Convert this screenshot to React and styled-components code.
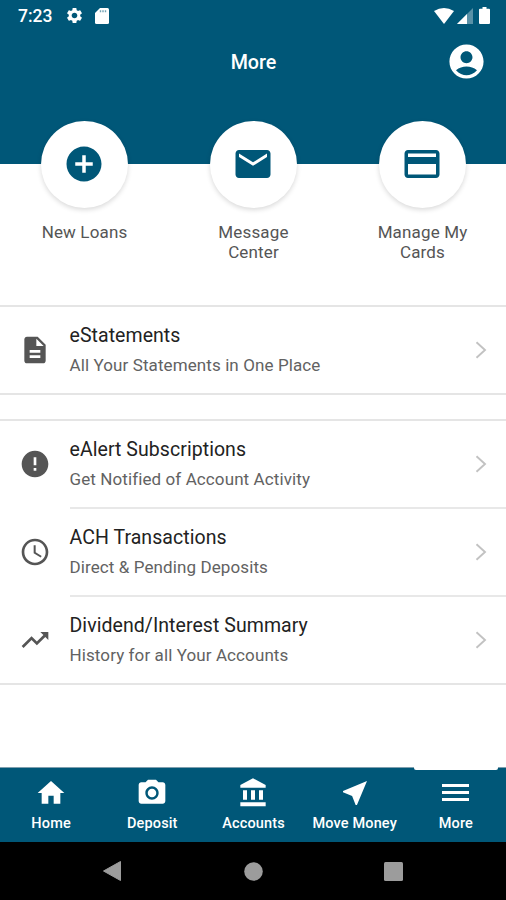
import * as React from 'react';
import styled, { createGlobalStyle } from 'styled-components';
import {
  MdAccountCircle,
  MdAddCircle,
  MdDescription,
  MdError,
  MdHome,
  MdMail,
  MdNearMe,
  MdPhotoCamera,
  MdSettings,
  MdTrendingUp,
} from 'react-icons/md';

const GlobalStyle = createGlobalStyle`
  * {
    box-sizing: border-box;
  }

  body {
    margin: 0;
    background: #fff;
    font-family: Roboto, 'Liberation Sans', sans-serif;
  }

  svg {
    display: block;
    flex: none;
  }
`;

const Screen = styled.div`
  display: flex;
  flex-direction: column;
  width: 506px;
  height: 900px;
  overflow: hidden;
  background: #fff;
`;

const Header = styled.header`
  flex: none;
  height: 163.5px;
  background: #005778;
  color: #fff;
`;

const StatusBar = styled.div`
  display: flex;
  align-items: center;
  height: 31px;
  padding: 0 16px 0 18px;
`;

const Clock = styled.span`
  width: 47px;
  padding-top: 1px;
  font-size: 17.5px;
  font-weight: 500;
  line-height: 31px;
`;

const StatusIcons = styled.div`
  display: flex;
  align-items: center;
  gap: ${(props) => props.$gap}px;
  margin-left: ${(props) => (props.$end ? 'auto' : 0)};
`;

const TitleBar = styled.div`
  display: grid;
  grid-template-columns: 1fr auto 1fr;
  align-items: center;
  height: 60px;
  padding: 0 19.5px;
`;

const Title = styled.h1`
  grid-column: 2;
  margin: 0;
  padding: 3px 0 0 1px;
  font-size: 19.7px;
  font-weight: 500;
  line-height: 24px;
`;

const Profile = styled.div`
  justify-self: end;
`;

const Shortcuts = styled.nav`
  display: grid;
  flex: none;
  grid-template-columns: repeat(3, 169px);
  justify-content: center;
  height: 184px;
  margin-top: -42.5px;
`;

const Shortcut = styled.div`
  display: flex;
  flex-direction: column;
  align-items: center;
`;

const Bubble = styled.div`
  display: flex;
  flex: none;
  align-items: center;
  justify-content: center;
  width: 87px;
  height: 87px;
  padding-bottom: 1px;
  border-radius: 50%;
  background: #fff;
  color: #005778;
  box-shadow: 0 2px 5px rgba(0, 0, 0, 0.15);
`;

const ShortcutLabel = styled.span`
  width: 110px;
  margin-top: 14px;
  padding-left: 1px;
  color: #555;
  font-size: 17px;
  line-height: 20px;
  letter-spacing: 0.15px;
  text-align: center;
`;

const List = styled.section`
  flex: none;
  margin-bottom: 24px;
  border: solid #e5e5e5;
  border-width: 2px 0;
`;

const Row = styled.div`
  display: flex;
  height: ${(props) => (props.$last ? 86 : 88)}px;
  padding-left: 19px;
  color: #555;
`;

const RowIcon = styled.div`
  display: flex;
  align-items: center;
  width: 50.5px;
  height: 85px;
`;

const RowBody = styled.div`
  display: flex;
  flex: 1;
  align-items: center;
  justify-content: space-between;
  padding-right: 19px;
  border-bottom: ${(props) => (props.$last ? 0 : '2px solid #e8e8e8')};
`;

const RowTitle = styled.div`
  color: #222;
  font-size: 19.5px;
  line-height: 24px;
  letter-spacing: 0.06px;
`;

const RowText = styled.div`
  margin-top: 6px;
  color: #626262;
  font-size: 17px;
  line-height: 22px;
  letter-spacing: 0.1px;
`;

const Tabs = styled.nav`
  display: grid;
  flex: none;
  grid-template-columns: repeat(5, 1fr);
  height: 75px;
  margin-top: auto;
  border-top: 1px solid #7f9fae;
  background: #005778;
`;

const Tab = styled.div`
  display: flex;
  flex-direction: column;
  align-items: center;
  padding-left: 1px;
  color: #fff;
  font-size: 14.5px;
  font-weight: 500;
  line-height: 18px;
  letter-spacing: 0.15px;
  white-space: nowrap;

  &::before {
    content: '';
    width: 84px;
    height: 3px;
    margin: -1px 0 6.5px;
    border-radius: 0 0 2px 2px;
    background: ${(props) => (props.$active ? '#fff' : 'transparent')};
  }

  svg {
    margin-bottom: 6.5px;
  }
`;

const SystemBar = styled.div`
  display: flex;
  flex: none;
  align-items: center;
  justify-content: space-between;
  height: 58px;
  padding: 0 103px 0 102px;
  background: #000;
`;

const SdCardIcon = () => (
  <svg width="14" height="16" viewBox="0 0 14 16">
    <path d="M5 0h7.5Q14 0 14 1.5v13q0 1.5-1.5 1.5h-11Q0 16 0 14.5V5z" fill="#fff" />
    <path d="M5.5 2.2v2M8 2.2v2M10.5 2.2v2" stroke="#005778" strokeOpacity=".55" strokeWidth="1.4" />
  </svg>
);

const WifiIcon = () => (
  <svg width="20" height="16" viewBox="0 0 20 16">
    <path d="M0 3Q10-3 20 3L10 16z" fill="#fff" />
  </svg>
);

const SignalIcon = () => (
  <svg width="16" height="16" viewBox="0 0 16 16">
    <path d="M0 16 16 0v16z" fill="#fff" fillOpacity=".35" />
    <path d="M0 16 10 6v10z" fill="#fff" />
  </svg>
);

const BatteryIcon = () => (
  <svg width="11" height="17" viewBox="0 0 11 17">
    <path d="M3.5 0h4v1.7H10q1 0 1 1V16q0 1-1 1H1q-1 0-1-1V2.7q0-1 1-1h2.5z" fill="#fff" />
  </svg>
);

const CardIcon = () => (
  <svg width="42" height="42" viewBox="0 0 24 24" fill="currentColor">
    <path d="M20 4H4c-1.11 0-1.99.89-1.99 2L2 18c0 1.11.89 2 2 2h16c1.11 0 2-.89 2-2V6c0-1.11-.89-2-2-2zm0 14H4v-6h16v6zm0-10H4V6h16v2z" />
  </svg>
);

const ClockIcon = () => (
  <svg width="32" height="32" viewBox="0 0 24 24" fill="currentColor">
    <path d="M11.99 2C6.47 2 2 6.48 2 12s4.47 10 9.99 10C17.52 22 22 17.52 22 12S17.52 2 11.99 2zM12 20c-4.42 0-8-3.58-8-8s3.58-8 8-8 8 3.58 8 8-3.58 8-8 8zm.5-13H11v6l5.25 3.15.75-1.23-4.5-2.67z" />
  </svg>
);

const BankIcon = () => (
  <svg width="32" height="32" viewBox="-.5 0 24 24" fill="currentColor">
    <path d="M4 10v7h3v-7H4zm6 0v7h3v-7h-3zM2 22h19v-3H2v3zm14-12v7h3v-7h-3zm-4.5-9L2 6v2h19V6l-9.5-5z" />
  </svg>
);

const MenuIcon = () => (
  <svg width="27" height="32" viewBox="0 0 27 32">
    <path d="M0 8.5h27M0 15.5h27M0 22.5h27" stroke="#fff" strokeWidth="2.9" />
  </svg>
);

const Chevron = () => (
  <svg width="12" height="20" viewBox="0 0 12 20">
    <path d="M1.5 2.3 10 10l-8.5 7.7" fill="none" stroke="#c2c2c2" strokeWidth="1.9" />
  </svg>
);

const shortcuts = [
  { label: 'New Loans', icon: <MdAddCircle size={42} /> },
  { label: 'Message Center', icon: <MdMail size={42} /> },
  { label: 'Manage My Cards', icon: <CardIcon /> },
];

const groups = [
  [
    {
      title: 'eStatements',
      text: 'All Your Statements in One Place',
      icon: <MdDescription size={32} />,
    },
  ],
  [
    {
      title: 'eAlert Subscriptions',
      text: 'Get Notified of Account Activity',
      icon: <MdError size={32} />,
    },
    {
      title: 'ACH Transactions',
      text: 'Direct & Pending Deposits',
      icon: <ClockIcon />,
    },
    {
      title: 'Dividend/Interest Summary',
      text: 'History for all Your Accounts',
      icon: <MdTrendingUp size={32} />,
    },
  ],
];

const tabs = [
  { label: 'Home', icon: <MdHome size={32} /> },
  { label: 'Deposit', icon: <MdPhotoCamera size={32} /> },
  { label: 'Accounts', icon: <BankIcon /> },
  { label: 'Move Money', icon: <MdNearMe size={32} /> },
  { label: 'More', icon: <MenuIcon />, active: true },
];

const App = () => {
  return (
    <Screen>
      <GlobalStyle />
      <Header>
        <StatusBar>
          <Clock>7:23</Clock>
          <StatusIcons $gap={11}>
            <MdSettings size={19} />
            <SdCardIcon />
          </StatusIcons>
          <StatusIcons $gap={3} $end>
            <WifiIcon />
            <SignalIcon />
            <span />
            <BatteryIcon />
          </StatusIcons>
        </StatusBar>
        <TitleBar>
          <Title>More</Title>
          <Profile>
            <MdAccountCircle size={41} />
          </Profile>
        </TitleBar>
      </Header>
      <Shortcuts>
        {shortcuts.map(({ label, icon }) => (
          <Shortcut key={label}>
            <Bubble>{icon}</Bubble>
            <ShortcutLabel>{label}</ShortcutLabel>
          </Shortcut>
        ))}
      </Shortcuts>
      {groups.map((rows) => (
        <List key={rows[0].title}>
          {rows.map(({ title, text, icon }, index) => (
            <Row key={title} $last={index === rows.length - 1}>
              <RowIcon>{icon}</RowIcon>
              <RowBody $last={index === rows.length - 1}>
                <div>
                  <RowTitle>{title}</RowTitle>
                  <RowText>{text}</RowText>
                </div>
                <Chevron />
              </RowBody>
            </Row>
          ))}
        </List>
      ))}
      <Tabs>
        {tabs.map(({ label, icon, active }) => (
          <Tab key={label} $active={active}>
            {icon}
            {label}
          </Tab>
        ))}
      </Tabs>
      <SystemBar>
        <svg width="20" height="22" viewBox="0 0 20 22">
          <path d="M1.5 11 18.5 1.5v19z" fill="#9c9c9c" stroke="#9c9c9c" strokeLinejoin="round" />
        </svg>
        <svg width="19" height="19" viewBox="0 0 19 19">
          <circle cx="9.5" cy="9.5" r="9.3" fill="#9c9c9c" />
        </svg>
        <svg width="19" height="19" viewBox="0 0 19 19">
          <rect width="19" height="19" rx="1.5" fill="#9c9c9c" />
        </svg>
      </SystemBar>
    </Screen>
  );
};

export default App;
